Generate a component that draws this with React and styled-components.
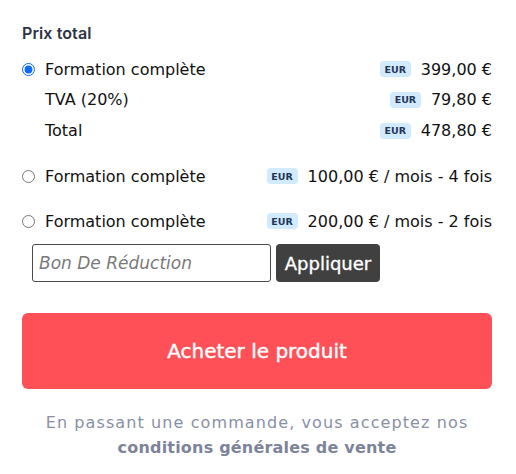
import React from "react";
import styled, { createGlobalStyle } from "styled-components";

const GlobalStyle = createGlobalStyle`
  html, body { margin: 0; padding: 0; background: #ffffff; }
  body { font-family: "DejaVu Sans", "Noto Sans", sans-serif; color: #111111; }
  * { box-sizing: border-box; }
`;

const Card = styled.div`
  width: 470px;
  margin: 0 0 0 22px;
  padding-top: 21px;
  display: flex;
  flex-direction: column;
`;

const Title = styled.div`
  font-family: Inter, "Noto Sans", sans-serif;
  font-weight: 600;
  font-size: 16px;
  line-height: 24px;
  letter-spacing: 0.1px;
  color: #2d3344;
`;

const Options = styled.div`
  margin-top: 9px;
  display: flex;
  flex-direction: column;
  gap: 15px;
`;

const Group = styled.div`
  display: flex;
  flex-direction: column;
`;

const Row = styled.label`
  display: flex;
  align-items: center;
  justify-content: space-between;
  height: ${(p) => p.$h || 30}px;
  font-size: 16px;
  cursor: pointer;
`;

const Left = styled.div`
  display: flex;
  align-items: center;
  gap: 10px;
  padding-left: ${(p) => (p.$indent ? 23 : 0)}px;
`;

const Radio = styled.input.attrs({ type: "radio" })`
  margin: 0;
  width: 13px;
  height: 13px;
  accent-color: #0b6bf5;
`;

const Right = styled.div`
  display: flex;
  align-items: center;
  gap: 10px;
`;

const Badge = styled.span`
  display: inline-flex;
  align-items: center;
  justify-content: center;
  width: 31px;
  height: 16px;
  border-radius: 4px;
  background: #d2eafd;
  color: #1d3557;
  font-size: 9.5px;
  font-weight: 700;
`;

const Price = styled.span`
  font-size: 16px;
  color: #111111;
`;

const CouponRow = styled.div`
  margin-top: 8px;
  padding-left: 10px;
  display: flex;
  gap: 5px;
  height: 38px;
`;

const CouponInput = styled.input`
  width: 239px;
  height: 38px;
  border: 1px solid #4a4a4a;
  border-radius: 3px;
  padding: 0 6px;
  font-family: "DejaVu Sans", sans-serif;
  font-size: 17px;
  outline: none;
  &::placeholder {
    color: #7a7a7a;
    font-style: italic;
  }
`;

const ApplyButton = styled.button`
  width: 104px;
  height: 38px;
  border: none;
  border-radius: 4px;
  background: #404040;
  color: #ffffff;
  font-family: "DejaVu Sans", sans-serif;
  font-size: 18px;
  -webkit-text-stroke: 0.35px #ffffff;
  padding: 0;
`;

const BuyButton = styled.button`
  margin-top: 31px;
  width: 470px;
  height: 76px;
  border: none;
  border-radius: 6px;
  background: #ff5058;
  color: #ffffff;
  font-family: "DejaVu Sans", sans-serif;
  font-size: 20px;
  -webkit-text-stroke: 0.4px #ffffff;
  padding: 0;
`;

const Footer = styled.p`
  margin: 21px 0 0 0;
  text-align: center;
  font-size: 16px;
  line-height: 25px;
  letter-spacing: 1.1px;
  color: #8990a5;
`;

const Strong = styled.strong`
  font-weight: 700;
  letter-spacing: 0.2px;
  color: #7d849a;
`;

function PriceTag({ children }) {
  return (
    <Right>
      <Badge>EUR</Badge>
      <Price>{children}</Price>
    </Right>
  );
}

export default function App() {
  return (
    <>
      <GlobalStyle />
      <Card>
        <Title>Prix total</Title>
        <Options>
          <Group>
            <Row>
              <Left>
                <Radio name="plan" defaultChecked />
                <span>Formation complète</span>
              </Left>
              <PriceTag>399,00 €</PriceTag>
            </Row>
            <Row as="div" $h={31}>
              <Left $indent>TVA (20%)</Left>
              <PriceTag>79,80 €</PriceTag>
            </Row>
            <Row as="div" $h={31}>
              <Left $indent>Total</Left>
              <PriceTag>478,80 €</PriceTag>
            </Row>
          </Group>
          <Row>
            <Left>
              <Radio name="plan" />
              <span>Formation complète</span>
            </Left>
            <PriceTag>100,00 € / mois - 4 fois</PriceTag>
          </Row>
          <Row>
            <Left>
              <Radio name="plan" />
              <span>Formation complète</span>
            </Left>
            <PriceTag>200,00 € / mois - 2 fois</PriceTag>
          </Row>
        </Options>
        <CouponRow>
          <CouponInput placeholder="Bon De Réduction" />
          <ApplyButton>Appliquer</ApplyButton>
        </CouponRow>
        <BuyButton>Acheter le produit</BuyButton>
        <Footer>
          En passant une commande, vous acceptez nos
          <br />
          <Strong>conditions générales de vente</Strong>
        </Footer>
      </Card>
    </>
  );
}
